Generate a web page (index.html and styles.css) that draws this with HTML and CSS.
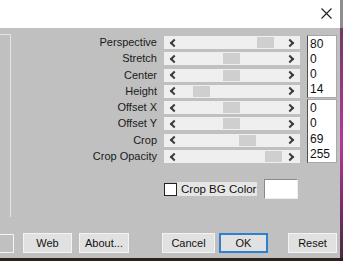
FILE: index.html
```html
<!DOCTYPE html>
<html lang="en">
  <head>
    <meta charset="UTF-8" />
    <meta name="viewport" content="width=device-width, initial-scale=1.0" />
    <title>Perspective Settings</title>
    <link rel="stylesheet" href="styles.css">
  </head>
  <body>
    <div class="screen">
      <div class="window">
        <div class="dialog">
          <div class="titlebar">
            <svg class="close" width="11" height="11" viewBox="0 0 11 11">
              <path d="M0.5 0.5 L10.5 10.5 M10.5 0.5 L0.5 10.5" stroke="#1e1e1e" stroke-width="1.1" fill="none" />
            </svg>
          </div>

          <div class="body">
            <div class="upper">
              <div class="side-panel"></div>

              <div class="settings">
                <div class="sliders">
                  <span class="label">Perspective</span>
                  <div class="track"><i class="arrow-l"></i><span class="thumb" style="left: 93px"></span><i class="arrow-r"></i></div>
                  <div class="values values-a">
                    <span>80</span><span>0</span><span>0</span><span>14</span>
                  </div>

                  <span class="label">Stretch</span>
                  <div class="track"><i class="arrow-l"></i><span class="thumb" style="left: 59px"></span><i class="arrow-r"></i></div>

                  <span class="label">Center</span>
                  <div class="track"><i class="arrow-l"></i><span class="thumb" style="left: 59px"></span><i class="arrow-r"></i></div>

                  <span class="label">Height</span>
                  <div class="track"><i class="arrow-l"></i><span class="thumb" style="left: 29px"></span><i class="arrow-r"></i></div>

                  <span class="label">Offset X</span>
                  <div class="track"><i class="arrow-l"></i><span class="thumb" style="left: 59px"></span><i class="arrow-r"></i></div>
                  <div class="values values-b">
                    <span>0</span><span>0</span><span>69</span><span>255</span>
                  </div>

                  <span class="label">Offset Y</span>
                  <div class="track"><i class="arrow-l"></i><span class="thumb" style="left: 59px"></span><i class="arrow-r"></i></div>

                  <span class="label">Crop</span>
                  <div class="track"><i class="arrow-l"></i><span class="thumb" style="left: 75px"></span><i class="arrow-r"></i></div>

                  <span class="label">Crop Opacity</span>
                  <div class="track"><i class="arrow-l"></i><span class="thumb" style="left: 101px"></span><i class="arrow-r"></i></div>
                </div>

                <div class="bg-row">
                  <label class="check">
                    <span class="box"></span>
                    <span class="check-text">Crop BG Color</span>
                  </label>
                  <div class="color-well"></div>
                </div>
              </div>
            </div>

            <div class="buttons">
              <div class="cut-field"></div>
              <button class="btn btn-web">Web</button>
              <button class="btn btn-about">About...</button>
              <button class="btn btn-cancel">Cancel</button>
              <button class="btn btn-ok">OK</button>
              <button class="btn btn-reset">Reset</button>
            </div>
          </div>
        </div>
        <div class="edge"></div>
      </div>
      <div class="taskbar"></div>
    </div>
  </body>
</html>
```

FILE: styles.css
```css
body {
  margin: 0;
  padding: 0;
  width: 343px;
  height: 261px;
  overflow: hidden;
  font-family: "Liberation Sans", Arial, sans-serif;
  font-size: 11px;
  color: #111;
}

.screen {
  display: flex;
  flex-direction: column;
  height: 261px;
}

.window {
  display: flex;
  height: 258px;
}

.dialog {
  flex: 1;
  display: flex;
  flex-direction: column;
  background-color: #c0c0c0;
}

.edge {
  width: 3px;
  background: linear-gradient(#8e8e8e 0 28px, #6e3a64 28px, #b8369a 55%, #7a2d6a 80%, #4a2a3a);
}

.taskbar {
  height: 3px;
  background-color: #2b2219;
}

/* title bar */
.titlebar {
  height: 28px;
  background-color: #ffffff;
  display: flex;
  justify-content: flex-end;
  align-items: flex-start;
}

.close {
  margin: 8px 8px 0 0;
}

.body {
  flex: 1;
  display: flex;
  flex-direction: column;
}

.upper {
  flex: 1;
  display: flex;
}

.side-panel {
  width: 10px;
  height: 182px;
  margin-top: 6px;
  border-top: 1px solid #e4e4e4;
  border-right: 1px solid #e4e4e4;
}

.settings {
  flex: 1;
  padding-top: 8px;
}

/* sliders */
.sliders {
  display: grid;
  grid-template-columns: 146px 136px 30px;
  grid-auto-rows: 13px;
  column-gap: 7px;
  row-gap: 3.3px;
}

.label {
  grid-column: 1;
  text-align: right;
  line-height: 13px;
  white-space: nowrap;
  color: #1a1a1a;
}

.track {
  grid-column: 2;
  position: relative;
  background-color: #efefef;
  display: flex;
  justify-content: space-between;
  align-items: center;
  padding: 0 6px;
}

.thumb {
  position: absolute;
  top: 1px;
  width: 17px;
  height: 11px;
  background-color: #cfcfcf;
}

.arrow-l,
.arrow-r {
  width: 4px;
  height: 4px;
  border-left: 2px solid #3c3c3c;
  border-bottom: 2px solid #3c3c3c;
  z-index: 1;
}

.arrow-l {
  transform: rotate(45deg);
  margin-left: 1px;
}

.arrow-r {
  transform: rotate(-135deg);
  margin-right: 1px;
}

.values {
  grid-column: 3;
  background-color: #ffffff;
  border: 1px solid #a8a8a8;
  border-left-color: #505050;
  display: flex;
  flex-direction: column;
  justify-content: space-around;
  padding-left: 2px;
  font-size: 12px;
}

.values-a {
  grid-row: 1 / span 4;
  margin-top: -1px;
}

.values-b {
  grid-row: 5 / span 4;
  margin-top: -2px;
}

/* crop background colour */
.bg-row {
  display: flex;
  align-items: center;
  margin-top: 16px;
  padding-left: 153px;
}

.check {
  display: flex;
  align-items: center;
}

.box {
  width: 11px;
  height: 11px;
  border: 1px solid #222;
  background-color: #ffffff;
}

.check-text {
  box-sizing: border-box;
  width: 80px;
  padding-left: 4px;
  background-color: #e6e6e6;
  line-height: 14px;
  font-size: 11.5px;
  white-space: nowrap;
}

.color-well {
  width: 32px;
  height: 18px;
  margin-left: 7px;
  background-color: #ffffff;
  border: 1px solid #ededed;
  border-top-color: #8a8a8a;
  border-left-color: #8a8a8a;
}

/* buttons */
.buttons {
  display: flex;
  align-items: center;
  height: 20px;
  margin-bottom: 5px;
}

.cut-field {
  width: 13px;
  height: 17px;
  border: 1px solid #f4f4f4;
  border-left: none;
}

.btn {
  height: 20px;
  padding: 0;
  font-family: "Liberation Sans", Arial, sans-serif;
  font-size: 11px;
  color: #111;
  background-color: #e1e1e1;
  border: 1px solid #f3f3f3;
  border-radius: 0;
}

.btn-web {
  width: 49px;
  margin-left: 9px;
}

.btn-about {
  width: 50px;
  margin-left: 7px;
}

.btn-cancel {
  width: 53px;
  margin-left: 33px;
}

.btn-ok {
  width: 49px;
  margin-left: 4px;
  border: 2px solid #2f7fd0;
}

.btn-reset {
  width: 49px;
  margin-left: 20px;
}
```
